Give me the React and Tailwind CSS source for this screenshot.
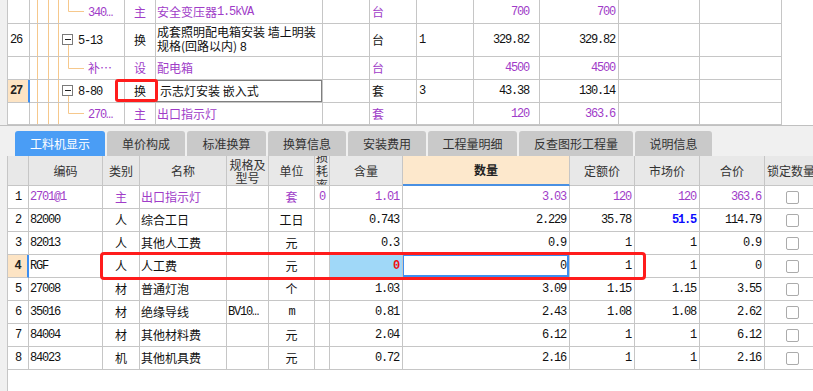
import React from 'react';

const M = "font-['Liberation_Mono',monospace] tracking-[-1.2px]";
const PUR = 'text-[#a03cc8]';
const CELL = 'flex items-center border-r border-b border-[#c6c6c6] overflow-hidden whitespace-nowrap';

function Mn({ children, className = '' }) {
  return <span className={M + ' ' + className}>{children}</span>;
}

function Tree({ h, type }) {
  const o = '#f6c88c';
  const mid = Math.floor(h / 2) + 0.5;
  const by = Math.floor((h - 11) / 2);
  return (
    <svg className="absolute left-0 top-0" width="95" height={h}>
      {[7, 18, 28].map((x) => (
        <line key={x} x1={x + 0.5} x2={x + 0.5} y1="0" y2={h} stroke={o} />
      ))}
      {type === 'child' && <path d={`M38.5 0V${mid}H54`} stroke={o} fill="none" />}
      {type === 'parent' && (
        <g>
          <line x1="38.5" x2="38.5" y1={by + 11} y2={h} stroke={o} />
          <rect x="32.5" y={by + 0.5} width="10" height="10" fill="#fff" stroke="#7a7a7a" />
          <line x1="35" x2="41" y1={by + 5.5} y2={by + 5.5} stroke="#222" />
        </g>
      )}
    </svg>
  );
}

const topRows = [
  { rh: 'h-[24px]', ch: 23, num: '', type: 'child', code: '340…', purple: true, kind: '主', name: <>安全变压器<Mn>1.5kVA</Mn></>, unit: '台', qty: '', price: '700', total: '700' },
  { rh: 'h-[33px]', ch: 32, num: '26', type: 'parent', code: '5-13', purple: false, kind: '换', name: <span className="whitespace-normal leading-[14px]">成套照明配电箱安装 墙上明装<br />规格(回路以内) <Mn>8</Mn></span>, unit: '台', qty: '1', price: '329.82', total: '329.82' },
  { rh: 'h-[23px]', ch: 22, num: '', type: 'child', code: '补…', purple: true, kind: '设', name: '配电箱', unit: '台', qty: '', price: '4500', total: '4500' },
  { rh: 'h-[23px]', ch: 22, num: '27', active: true, type: 'parent', code: '8-80', purple: false, kind: '换', name: '示志灯安装 嵌入式', sel: true, unit: '套', qty: '3', price: '43.38', total: '130.14' },
  { rh: 'h-[22px]', ch: 21, num: '', type: 'child', code: '270…', purple: true, kind: '主', name: '出口指示灯', unit: '套', qty: '', price: '120', total: '363.6' },
];

function TopRow({ r }) {
  const col = r.purple ? PUR : 'text-[#111]';
  return (
    <div className={'grid grid-cols-[22px_95px_31px_167px_47px_47px_57px_66px_79px_81px_82px] ' + r.rh}>
      <div className={CELL + (r.active ? ' bg-[#fde4c4] border-r-2 border-r-[#3d8ef0] font-bold' : '') + ' pl-[2px]'}>
        <Mn className={r.active ? 'font-bold text-[#222]' : ''}>{r.num}</Mn>
      </div>
      <div className={CELL + ' relative ' + (r.type === 'parent' ? 'pl-[48px]' : 'pl-[58px]')}>
        <Tree h={r.ch} type={r.type} />
        <span className={'relative ' + col}>
          {r.code === '补…' ? '补…' : <Mn>{r.code}</Mn>}
        </span>
      </div>
      <div className={CELL + ' justify-center ' + col}>{r.kind}</div>
      <div className={CELL + ' relative pl-[1px] ' + col + (r.sel ? ' pl-[4px]' : '')}>
        {r.name}
        {r.sel && <div className="absolute inset-[-1px] border-2 border-[#7f7f7f]" />}
      </div>
      <div className={CELL} />
      <div className={CELL + ' pl-[2px] ' + col}>{r.unit}</div>
      <div className={CELL + ' pl-[2px] ' + col}><Mn>{r.qty}</Mn></div>
      <div className={CELL + ' justify-end pr-[10px] ' + col}><Mn>{r.price}</Mn></div>
      <div className={CELL + ' justify-end pr-[3px] ' + col}><Mn>{r.total}</Mn></div>
      <div className={CELL} />
      <div className={CELL} />
    </div>
  );
}

const tabs = [
  { t: '工料机显示', w: 'w-[90px]', a: true },
  { t: '单价构成', w: 'w-[78px]' },
  { t: '标准换算', w: 'w-[79px]' },
  { t: '换算信息', w: 'w-[78px]' },
  { t: '安装费用', w: 'w-[78px]' },
  { t: '工程量明细', w: 'w-[89px]' },
  { t: '反查图形工程量', w: 'w-[114px]' },
  { t: '说明信息', w: 'w-[77px]' },
];

const rows = [
  { n: '1', code: '2701@1', kind: '主', name: '出口指示灯', spec: '', unit: '套', loss: '0', content: '1.01', qty: '3.03', quota: '120', market: '120', total: '363.6', p: true },
  { n: '2', code: '82000', kind: '人', name: '综合工日', spec: '', unit: '工日', loss: '', content: '0.743', qty: '2.229', quota: '35.78', market: '51.5', total: '114.79', blue: true },
  { n: '3', code: '82013', kind: '人', name: '其他人工费', spec: '', unit: '元', loss: '', content: '0.3', qty: '0.9', quota: '1', market: '1', total: '0.9' },
  { n: '4', code: 'RGF', kind: '人', name: '人工费', spec: '', unit: '元', loss: '', content: '0', qty: '0', quota: '1', market: '1', total: '0', sel: true },
  { n: '5', code: '27008', kind: '材', name: '普通灯泡', spec: '', unit: '个', loss: '', content: '1.03', qty: '3.09', quota: '1.15', market: '1.15', total: '3.55' },
  { n: '6', code: '35016', kind: '材', name: '绝缘导线', spec: 'BV10…', unit: 'm', loss: '', content: '0.81', qty: '2.43', quota: '1.08', market: '1.08', total: '2.62' },
  { n: '7', code: '84004', kind: '材', name: '其他材料费', spec: '', unit: '元', loss: '', content: '2.04', qty: '6.12', quota: '1', market: '1', total: '6.12' },
  { n: '8', code: '84023', kind: '机', name: '其他机具费', spec: '', unit: '元', loss: '', content: '0.72', qty: '2.16', quota: '1', market: '1', total: '2.16' },
];

const GRID = 'grid w-max grid-cols-[21px_74px_37px_87px_42px_46px_15px_73px_167px_65px_65px_65px_80px]';
const HC = 'flex items-center justify-center border-r border-b border-[#c6c6c6] bg-[#e8e8e8] text-[#333] overflow-hidden';

function Row({ r }) {
  const c = r.p ? PUR : 'text-[#111]';
  return (
    <div className={GRID + ' h-[23px]'}>
      <div className={CELL + ' justify-center' + (r.sel ? ' bg-[#fde4c4] border-r-2 border-r-[#3d8ef0]' : '')}>
        <Mn className={r.sel ? 'font-bold text-[#222]' : 'text-[#111]'}>{r.n}</Mn>
      </div>
      <div className={CELL + ' pl-[1px] ' + c}><Mn>{r.code}</Mn></div>
      <div className={CELL + ' justify-center ' + c}>{r.kind}</div>
      <div className={CELL + ' pl-[1px] ' + c}>{r.name}</div>
      <div className={CELL + ' pl-[1px] text-[#111]'}><Mn>{r.spec}</Mn></div>
      <div className={CELL + ' justify-center ' + c}>{r.unit === 'm' ? <Mn>m</Mn> : r.unit}</div>
      <div className={CELL + ' justify-center ' + c}><Mn>{r.loss}</Mn></div>
      <div className={CELL + ' justify-end pr-[3px] ' + (r.sel ? 'bg-[#a0d8f8] text-[#f01010] font-bold' : c)}><Mn>{r.content}</Mn></div>
      <div className={CELL + ' relative justify-end pr-[3px] ' + c}>
        <Mn>{r.qty}</Mn>
        {r.sel && <div className="absolute left-[-1px] top-[-1px] right-0 bottom-0 border-2 border-[#3d8ef0]" />}
      </div>
      <div className={CELL + ' justify-end pr-[3px] ' + c}><Mn>{r.quota}</Mn></div>
      <div className={CELL + ' justify-end pr-[3px] ' + (r.blue ? 'text-[#0a0aff] font-bold' : c)}><Mn>{r.market}</Mn></div>
      <div className={CELL + ' justify-end pr-[3px] ' + c}><Mn>{r.total}</Mn></div>
      <div className={CELL + ' pl-[21px]'}>
        <div className="w-[13px] h-[13px] rounded-[2px] border border-[#ababab] bg-white" />
      </div>
    </div>
  );
}

export default function App() {
  return (
    <div className="relative w-[813px] h-[391px] overflow-hidden bg-[#f0f0f0] text-[12px] leading-[14px] text-[#111] font-['Noto_Sans_CJK_SC',sans-serif]">
      {/* top grid */}
      <div className="flex h-[125px]">
        <div className="w-[7px] shrink-0" />
        <div className="flex-1 bg-white border-l border-[#c6c6c6]">
          {topRows.map((r, i) => (
            <TopRow key={i} r={r} />
          ))}
        </div>
      </div>

      {/* tabs */}
      <div className="h-[31px] border-t border-[#c0c0c0] flex items-end gap-[2px] pl-[15px]">
        {tabs.map((t) => (
          <div
            key={t.t}
            className={
              'h-[25px] flex items-center justify-center rounded-t-[3px] ' +
              t.w +
              (t.a ? ' bg-[#4a9df5] text-white' : ' bg-[#c9c9c9] text-[#333]')
            }
          >
            {t.t}
          </div>
        ))}
      </div>

      {/* bottom grid */}
      <div className="flex h-[235px]">
        <div className="w-[7px] shrink-0" />
        <div className="flex-1 bg-white border-l border-[#c6c6c6] overflow-hidden">
          <div className={GRID + ' h-[30px]'}>
            <div className={HC} />
            <div className={HC}>编码</div>
            <div className={HC}>类别</div>
            <div className={HC}>名称</div>
            <div className={HC + ' flex-col leading-[13px]'}>
              <span>规格及</span>
              <span>型号</span>
            </div>
            <div className={HC}>单位</div>
            <div className={HC + ' flex-col leading-[14px] whitespace-nowrap'}>
              <span>损</span>
              <span>耗</span>
              <span>率</span>
            </div>
            <div className={HC}>含量</div>
            <div className="flex items-center justify-center border-r border-[#c6c6c6] border-b-2 border-b-[#4a90e2] bg-[#fde8cc] text-[#222] font-bold">数量</div>
            <div className={HC}>定额价</div>
            <div className={HC}>市场价</div>
            <div className={HC}>合价</div>
            <div className={HC + ' justify-start pl-[2px]'}>锁定数量</div>
          </div>
          {rows.map((r) => (
            <Row key={r.n} r={r} />
          ))}
        </div>
      </div>

      {/* red annotation boxes */}
      <div className="absolute left-[115px] top-[79px] w-[43px] h-[23px] border-[3px] border-[#ff1c1c] rounded-[3px]" />
      <div className="absolute left-[100px] top-[252px] w-[546px] h-[28px] border-[3px] border-[#ff1c1c] rounded-[4px]" />
    </div>
  );
}
